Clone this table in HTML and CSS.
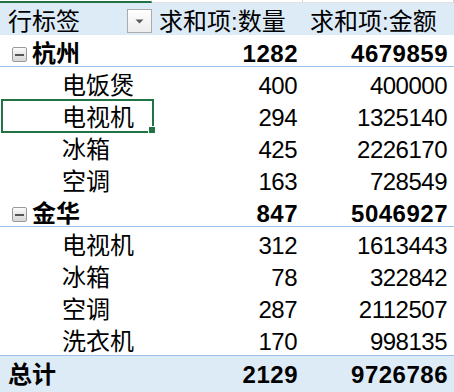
FILE: index.html
```html
<!DOCTYPE html>
<html lang="zh-CN">
<head>
<meta charset="utf-8">
<title>数据透视表</title>
<link rel="stylesheet" href="styles.css">
</head>
<body>
<div class="sheet">
  <div class="strip">
    <div class="s s1"></div>
    <div class="s s2"></div>
    <div class="s s3"></div>
  </div>

  <div class="row head">
    <div class="c c1 headlabel">
      <span>行标签</span>
      <span class="dd">
        <svg width="9" height="5" viewBox="0 0 9 5"><path d="M0.5 0.5 L8.5 0.5 L4.5 4.5 Z" fill="#5a5a5a"/></svg>
      </span>
    </div>
    <div class="c c2 htext">求和项:数量</div>
    <div class="c c3 htext">求和项:金额</div>
  </div>

  <div class="row group">
    <div class="c c1 grp"><span class="tog"><i></i></span><span>杭州</span></div>
    <div class="c c2 num">1282</div>
    <div class="c c3 num">4679859</div>
  </div>
  <div class="row item">
    <div class="c c1 lbl">电饭煲</div>
    <div class="c c2 num">400</div>
    <div class="c c3 num">400000</div>
  </div>
  <div class="row item">
    <div class="c c1 lbl sel">电视机<span class="selbox"><span class="handle"></span></span></div>
    <div class="c c2 num">294</div>
    <div class="c c3 num">1325140</div>
  </div>
  <div class="row item">
    <div class="c c1 lbl">冰箱</div>
    <div class="c c2 num">425</div>
    <div class="c c3 num">2226170</div>
  </div>
  <div class="row item">
    <div class="c c1 lbl">空调</div>
    <div class="c c2 num">163</div>
    <div class="c c3 num">728549</div>
  </div>

  <div class="row group">
    <div class="c c1 grp"><span class="tog"><i></i></span><span>金华</span></div>
    <div class="c c2 num">847</div>
    <div class="c c3 num">5046927</div>
  </div>
  <div class="row item">
    <div class="c c1 lbl">电视机</div>
    <div class="c c2 num">312</div>
    <div class="c c3 num">1613443</div>
  </div>
  <div class="row item">
    <div class="c c1 lbl">冰箱</div>
    <div class="c c2 num">78</div>
    <div class="c c3 num">322842</div>
  </div>
  <div class="row item">
    <div class="c c1 lbl">空调</div>
    <div class="c c2 num">287</div>
    <div class="c c3 num">2112507</div>
  </div>
  <div class="row item">
    <div class="c c1 lbl">洗衣机</div>
    <div class="c c2 num">170</div>
    <div class="c c3 num">998135</div>
  </div>

  <div class="row total">
    <div class="c c1 tlabel">总计</div>
    <div class="c c2 num">2129</div>
    <div class="c c3 num">9726786</div>
  </div>
</div>
</body>
</html>
```

FILE: styles.css
```css
html, body {
  margin: 0;
  padding: 0;
  background: #ffffff;
}
body {
  width: 454px;
  height: 392px;
  overflow: hidden;
}
.sheet {
  font-family: "Liberation Sans", "Noto Sans CJK SC", sans-serif;
  font-size: 24px;
  color: #000;
}
.strip {
  display: grid;
  grid-template-columns: 152px 151px 151px;
  height: 3px;
}
.s {
  box-sizing: border-box;
  border-right: 1px solid #d4d4d4;
}
.s1 {
  border-top: 1px solid #ffffff;
  border-bottom: 2px solid #217346;
  border-right: 1px solid #c8c8c8;
}
.s2, .s3 {
  border-bottom: 1px solid #e2e2e2;
}
.row {
  display: grid;
  grid-template-columns: 152px 153px 149px;
  height: 32px;
  box-sizing: border-box;
}
.c {
  box-sizing: border-box;
  height: 32px;
  padding-top: 6px;
  line-height: 26px;
  white-space: nowrap;
  position: relative;
}
.head {
  background: #ddebf7;
}
.headlabel {
  display: flex;
  justify-content: space-between;
  align-items: flex-start;
  padding-left: 8px;
}
.dd {
  box-sizing: border-box;
  width: 25px;
  height: 24px;
  border: 1px solid #acacac;
  background: linear-gradient(#ffffff, #ededed);
  display: flex;
  align-items: center;
  justify-content: center;
}
.dd svg {
  display: block;
}
.c2.htext {
  padding-left: 7px;
}
.c3.htext {
  padding-left: 5px;
}
.group {
  border-bottom: 1px solid #9bc2e6;
  font-weight: bold;
}
.group .c {
  height: 31px;
}
.grp {
  display: flex;
  align-items: flex-start;
  padding-left: 12px;
}
.tog {
  box-sizing: border-box;
  width: 15px;
  height: 15px;
  margin-top: 6px;
  margin-right: 5px;
  border: 1px solid #9a9a9a;
  border-radius: 2px;
  background: linear-gradient(#fafafa, #d6d6d6);
  display: flex;
  align-items: center;
  justify-content: center;
}
.tog i {
  display: block;
  width: 9px;
  height: 2px;
  background: #555;
}
.lbl {
  padding-left: 62px;
}
.num {
  text-align: right;
  letter-spacing: -0.5px;
}
.group .num, .total .num {
  letter-spacing: 0.5px;
}
.c2.num {
  padding-right: 8px;
}
.c3.num {
  padding-right: 7px;
}
.group .c2.num, .total .c2.num {
  padding-right: 7px;
}
.group .c3.num, .total .c3.num {
  padding-right: 6px;
}
.total {
  background: #ddebf7;
  border-top: 1px solid #9bc2e6;
  font-weight: bold;
  height: 40px;
}
.total .c {
  height: 39px;
  padding-top: 6px;
}
.tlabel {
  padding-left: 8px;
}
.selbox {
  position: absolute;
  left: 1px;
  top: 0;
  width: 153px;
  height: 34px;
  box-sizing: border-box;
  border: 2px solid #217346;
}
.handle {
  position: absolute;
  right: -4px;
  bottom: -3px;
  width: 6px;
  height: 6px;
  background: #217346;
  border: 1px solid #ffffff;
}
```
